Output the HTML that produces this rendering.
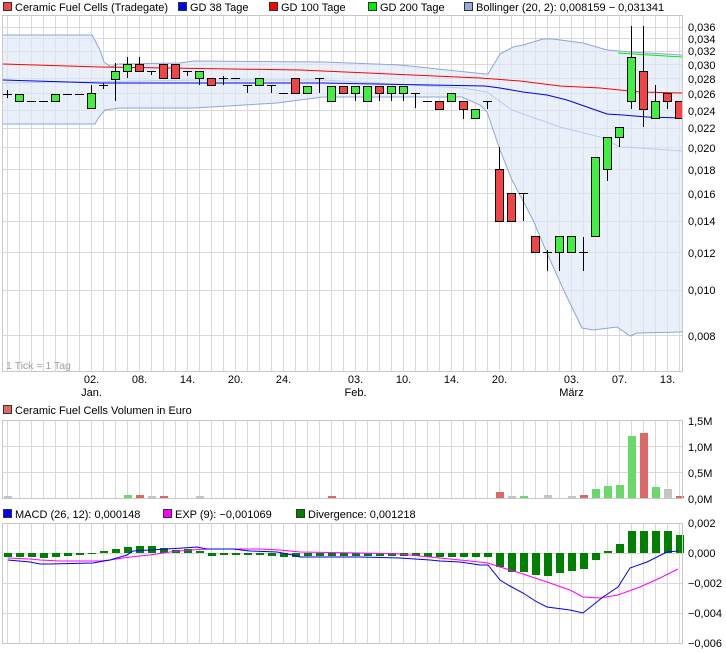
<!DOCTYPE html>
<html><head><meta charset="utf-8">
<style>
html,body{margin:0;padding:0;background:#fff;}
svg{display:block;font-family:"Liberation Sans",sans-serif;font-size:11px;}
</style></head>
<body>
<svg width="726" height="652" viewBox="0 0 726 652" xmlns="http://www.w3.org/2000/svg">
<defs>
<pattern id="vg" x="7" y="0" width="12" height="10" patternUnits="userSpaceOnUse"><rect x="0" y="0" width="1" height="10" fill="#d9d9d9"/></pattern>
<clipPath id="cm"><rect x="3" y="16" width="679" height="355"/></clipPath>
</defs>
<rect width="726" height="652" fill="#fff"/>

<!-- Legend top -->
<g>
<rect x="3.5" y="2.5" width="8" height="8" fill="#f04848" stroke="#333"/>
<text x="15" y="11">Ceramic Fuel Cells (Tradegate)</text>
<rect x="178.5" y="2.5" width="8" height="8" fill="#0000ff" stroke="#333"/>
<text x="190" y="11">GD 38 Tage</text>
<rect x="269.5" y="2.5" width="8" height="8" fill="#ff0000" stroke="#333"/>
<text x="281" y="11">GD 100 Tage</text>
<rect x="368.5" y="2.5" width="8" height="8" fill="#00ee00" stroke="#333"/>
<text x="380" y="11">GD 200 Tage</text>
<rect x="464.5" y="2.5" width="8" height="8" fill="#94acdc" stroke="#333"/>
<text x="476" y="11">Bollinger (20, 2): 0,008159 − 0,031341</text>
</g>

<!-- Main chart -->
<rect x="3" y="16" width="679" height="355" fill="url(#vg)"/>
<g stroke="#d9d9d9" stroke-width="1" shape-rendering="crispEdges">
<path d="M3 27.5H682M3 38.5H682M3 51.5H682M3 64.5H682M3 78.5H682M3 93.5H682M3 110.5H682M3 128.5H682M3 147.5H682M3 169.5H682M3 193.5H682M3 221.5H682M3 252.5H682M3 290.5H682M3 335.5H682"/>
</g>
<g clip-path="url(#cm)">
<path d="M3,35 L92,35 L100,50 L104,62 L111,67 L118,64 L180,63 L194,61 L323,62 L400,65 L485,74 L488,74 L500,54 L513,47 L523,45 L543,39 L553,39 L583,43 L607,50 L630,52 L682,55 L682,332 L637,333 L630,336 L617,327 L593,330 L582,328 L565,293 L547,253 L533,220 L512,180 L500,150 L487,112 L480,105 L462,97 L323,97 L277,103 L194,108 L120,108 L105,110 L99,117 L95,124 L3,124 Z" fill="#dfe8f8" fill-opacity="0.65"/>
<polyline points="3,35 92,35 100,50 104,62 111,67 118,64 180,63 194,61 323,62 400,65 485,74 488,74 500,54 513,47 523,45 543,39 553,39 583,43 607,50 630,52 682,55" fill="none" stroke="#8ea6da" stroke-width="1"/>
<polyline points="3,124 95,124 99,117 105,110 120,108 194,108 277,103 323,97 462,97 480,105 487,112 500,150 512,180 533,220 547,253 565,293 582,328 593,330 617,327 630,336 637,333 682,332" fill="none" stroke="#8ea6da" stroke-width="1"/>
<polyline points="3,83 200,80 323,80 462,88 487,92 512,110 560,127 600,137 620,147 640,148 682,151" fill="none" stroke="#b8ccf2" stroke-width="1"/>
<polyline points="3,64 100,67 300,70 480,78 520,81 560,86 600,88 640,92 682,93" fill="none" stroke="#ff0000" stroke-width="1"/>
<polyline points="3,80 100,83 323,83 485,86 500,88 523,92 547,95 567,100 587,107 607,114 623,115 647,117 682,118" fill="none" stroke="#0000ee" stroke-width="1"/>
<polyline points="618,53 650,55 682,57" fill="none" stroke="#00ee00" stroke-width="1"/>

<!-- wicks & doji -->
<path stroke="#000" stroke-width="1" fill="none" shape-rendering="crispEdges" d="M7.5 90V98M91.5 85V108M103.5 83V89M115.5 63V101M127.5 57V78M139.5 57V71M151.5 71V75M187.5 71V76M199.5 71V85M223.5 76V85M247.5 85V93M271.5 85V93M319.5 78V93M355.5 86V101M379.5 86V101M391.5 86V101M403.5 86V101M415.5 93V108M463.5 101V119M487.5 101V109M499.5 147V221M523.5 193V221M547.5 250V271M559.5 236V271M583.5 237V271M607.5 137V181M619.5 127V147M631.5 26V109M643.5 26V127M655.5 85V118M667.5 93V109
M3 94.5h9M27 101.5h9M39 101.5h9M63 94.5h9M75 94.5h9M99 85.5h9M147 71.5h9M183 71.5h9M219 78.5h9M231 78.5h9M243 85.5h9M267 85.5h9M279 93.5h9M315 78.5h9M411 93.5h9M423 101.5h9M483 101.5h9M519 193.5h9M543 252.5h9M579 252.5h9"/>
<!-- bodies -->
<g stroke="#000" stroke-width="1" shape-rendering="crispEdges">
<g fill="#3ff03f">
<rect x="15.5" y="94.5" width="8" height="7"/>
<rect x="51.5" y="94.5" width="8" height="7"/>
<rect x="87.5" y="93.5" width="8" height="15"/>
<rect x="111.5" y="71.5" width="8" height="8"/>
<rect x="123.5" y="64.5" width="8" height="7"/>
<rect x="195.5" y="71.5" width="8" height="7"/>
<rect x="255.5" y="78.5" width="8" height="7"/>
<rect x="303.5" y="86.5" width="8" height="7"/>
<rect x="327.5" y="86.5" width="8" height="15"/>
<rect x="351.5" y="86.5" width="8" height="7"/>
<rect x="363.5" y="86.5" width="8" height="15"/>
<rect x="387.5" y="86.5" width="8" height="7"/>
<rect x="399.5" y="86.5" width="8" height="7"/>
<rect x="447.5" y="93.5" width="8" height="8"/>
<rect x="471.5" y="109.5" width="8" height="9"/>
<rect x="555.5" y="236.5" width="8" height="16"/>
<rect x="567.5" y="236.5" width="8" height="16"/>
<rect x="591.5" y="157.5" width="8" height="79"/>
<rect x="603.5" y="137.5" width="8" height="32"/>
<rect x="615.5" y="127.5" width="8" height="10"/>
<rect x="627.5" y="57.5" width="8" height="44"/>
<rect x="651.5" y="101.5" width="8" height="17"/>
</g>
<g fill="#f24444">
<rect x="135.5" y="64.5" width="8" height="7"/>
<rect x="159.5" y="64.5" width="8" height="14"/>
<rect x="171.5" y="64.5" width="8" height="14"/>
<rect x="207.5" y="78.5" width="8" height="7"/>
<rect x="291.5" y="78.5" width="8" height="15"/>
<rect x="339.5" y="86.5" width="8" height="7"/>
<rect x="375.5" y="86.5" width="8" height="7"/>
<rect x="435.5" y="101.5" width="8" height="8"/>
<rect x="459.5" y="101.5" width="8" height="8"/>
<rect x="495.5" y="169.5" width="8" height="52"/>
<rect x="507.5" y="193.5" width="8" height="28"/>
<rect x="531.5" y="236.5" width="8" height="16"/>
<rect x="639.5" y="71.5" width="8" height="38"/>
<rect x="663.5" y="93.5" width="8" height="8"/>
<rect x="675.5" y="101.5" width="8" height="17"/>
</g>
</g>
</g>
<rect x="2.5" y="15.5" width="680" height="356" fill="none" stroke="#c8c8c8"/>
<text x="6" y="369" fill="#a0a0a0" font-size="10.5">1 Tick = 1 Tag</text>
<g fill="#000">
<text x="688" y="31">0,036</text><text x="688" y="43">0,034</text><text x="688" y="55">0,032</text>
<text x="688" y="69">0,030</text><text x="688" y="83">0,028</text><text x="688" y="98">0,026</text>
<text x="688" y="115">0,024</text><text x="688" y="132">0,022</text><text x="688" y="152">0,020</text>
<text x="688" y="174">0,018</text><text x="688" y="198">0,016</text><text x="688" y="225">0,014</text>
<text x="688" y="257">0,012</text><text x="688" y="294">0,010</text><text x="688" y="340">0,008</text>
</g>
<g text-anchor="middle">
<text x="91.5" y="383">02.</text><text x="91.5" y="396">Jan.</text>
<text x="139.5" y="383">08.</text><text x="187.5" y="383">14.</text>
<text x="235.5" y="383">20.</text><text x="283.5" y="383">24.</text>
<text x="355.5" y="383">03.</text><text x="355.5" y="396">Feb.</text>
<text x="403.5" y="383">10.</text><text x="451.5" y="383">14.</text>
<text x="499.5" y="383">20.</text>
<text x="571.5" y="383">03.</text><text x="571.5" y="396">März</text>
<text x="619.5" y="383">07.</text><text x="667.5" y="383">13.</text>
</g>

<!-- Volume -->
<rect x="3.5" y="405.5" width="8" height="8" fill="#dc6868" stroke="#333"/>
<text x="15" y="414">Ceramic Fuel Cells Volumen in Euro</text>
<rect x="3" y="421" width="679" height="77" fill="url(#vg)"/>
<path d="M3 446.5H682M3 472.5H682" stroke="#d9d9d9" shape-rendering="crispEdges"/>
<g shape-rendering="crispEdges">
<g fill="#c4c4c4">
<rect x="4" y="496" width="8" height="2"/><rect x="148" y="496" width="8" height="2"/><rect x="196" y="496" width="8" height="2"/>
<rect x="508" y="496" width="8" height="2"/><rect x="544" y="495" width="8" height="3"/><rect x="568" y="496" width="8" height="2"/>
<rect x="664" y="489" width="8" height="9"/>
</g>
<g fill="#6ad96a">
<rect x="124" y="495" width="8" height="3"/><rect x="520" y="496" width="8" height="2"/>
<rect x="592" y="489" width="8" height="9"/><rect x="604" y="486" width="8" height="12"/><rect x="616" y="485" width="8" height="13"/>
<rect x="628" y="436" width="8" height="62"/><rect x="652" y="487" width="8" height="11"/>
</g>
<g fill="#dc6868">
<rect x="136" y="495" width="8" height="3"/><rect x="160" y="496" width="8" height="2"/><rect x="328" y="496" width="8" height="2"/>
<rect x="496" y="492" width="8" height="6"/><rect x="580" y="495" width="8" height="3"/>
<rect x="640" y="433" width="8" height="65"/><rect x="676" y="496" width="8" height="2"/>
</g>
</g>
<rect x="2.5" y="420.5" width="680" height="78" fill="none" stroke="#c8c8c8"/>
<text x="688" y="425">1,5M</text><text x="688" y="451">1,0M</text><text x="688" y="477">0,5M</text><text x="688" y="503">0,0M</text>

<!-- MACD -->
<rect x="3.5" y="509.5" width="8" height="8" fill="#0000ff" stroke="#333"/>
<text x="15" y="518">MACD (26, 12): 0,000148</text>
<rect x="163.5" y="509.5" width="8" height="8" fill="#ff00ff" stroke="#333"/>
<text x="175" y="518">EXP (9): −0,001069</text>
<rect x="296.5" y="509.5" width="8" height="8" fill="#008000" stroke="#333"/>
<text x="308" y="518">Divergence: 0,001218</text>
<rect x="3" y="524" width="679" height="119" fill="url(#vg)"/>
<path d="M3 553.5H682M3 583.5H682M3 613.5H682" stroke="#d9d9d9" shape-rendering="crispEdges"/>
<g fill="#008000" shape-rendering="crispEdges">
<rect x="4" y="553" width="8" height="4"/><rect x="16" y="553" width="8" height="4"/><rect x="28" y="553" width="8" height="4"/>
<rect x="40" y="553" width="8" height="5"/><rect x="52" y="553" width="8" height="4"/><rect x="64" y="553" width="8" height="3"/>
<rect x="76" y="553" width="8" height="2"/><rect x="88" y="553" width="8" height="1"/><rect x="100" y="551" width="8" height="2"/>
<rect x="112" y="549" width="8" height="4"/><rect x="124" y="547" width="8" height="6"/><rect x="136" y="546" width="8" height="7"/>
<rect x="148" y="546" width="8" height="7"/><rect x="160" y="548" width="8" height="5"/><rect x="172" y="550" width="8" height="3"/>
<rect x="184" y="549" width="8" height="4"/><rect x="196" y="551" width="8" height="2"/><rect x="208" y="553" width="8" height="3"/>
<rect x="220" y="553" width="8" height="2"/><rect x="232" y="553" width="8" height="2"/><rect x="244" y="553" width="8" height="2"/>
<rect x="256" y="553" width="8" height="2"/><rect x="268" y="553" width="8" height="3"/><rect x="280" y="553" width="8" height="4"/>
<rect x="292" y="553" width="8" height="4"/><rect x="304" y="553" width="8" height="3"/><rect x="316" y="553" width="8" height="3"/>
<rect x="328" y="553" width="8" height="3"/><rect x="340" y="553" width="8" height="3"/><rect x="352" y="553" width="8" height="3"/>
<rect x="364" y="553" width="8" height="3"/><rect x="376" y="553" width="8" height="3"/><rect x="388" y="553" width="8" height="3"/>
<rect x="400" y="553" width="8" height="3"/><rect x="412" y="553" width="8" height="3"/><rect x="424" y="553" width="8" height="4"/>
<rect x="436" y="553" width="8" height="4"/><rect x="448" y="553" width="8" height="4"/><rect x="460" y="553" width="8" height="4"/>
<rect x="472" y="553" width="8" height="4"/><rect x="484" y="553" width="8" height="4"/><rect x="496" y="553" width="8" height="14"/>
<rect x="508" y="553" width="8" height="19"/><rect x="520" y="553" width="8" height="19"/><rect x="532" y="553" width="8" height="22"/>
<rect x="544" y="553" width="8" height="23"/><rect x="556" y="553" width="8" height="20"/><rect x="568" y="553" width="8" height="18"/>
<rect x="580" y="553" width="8" height="16"/><rect x="592" y="553" width="8" height="7"/><rect x="604" y="551" width="8" height="2"/>
<rect x="616" y="544" width="8" height="9"/><rect x="628" y="531" width="8" height="22"/><rect x="640" y="531" width="8" height="22"/>
<rect x="652" y="531" width="8" height="22"/><rect x="664" y="531" width="8" height="22"/><rect x="676" y="535" width="8" height="18"/>
</g>
<polyline fill="none" stroke="#ff00ff" stroke-width="1" points="8,558 30,559 40,560 60,561 100,561 110,560 130,557 150,555 170,552 190,550 210,549 260,549 280,550 300,552 360,553 400,554 440,558 470,561 488,563 500,567 520,573 547,582 570,590 583,597 600,598 618,595 640,587 660,578 678,569"/>
<polyline fill="none" stroke="#0000ee" stroke-width="1" points="8,560 30,562 40,564 50,564 93,563 110,560 127,555 133,551 150,550 183,548 197,547 207,549 233,549 250,551 277,552 293,555 300,557 360,557 400,558 430,560 440,561 460,562 480,565 488,565 500,580 508,585 523,593 537,602 547,607 570,610 583,613 603,597 618,587 630,568 647,562 667,552 678,551"/>
<rect x="2.5" y="523.5" width="680" height="120" fill="none" stroke="#c8c8c8"/>
<text x="688" y="527">0,002</text><text x="688" y="557">0,000</text><text x="688" y="587">−0,002</text>
<text x="688" y="617">−0,004</text><text x="688" y="647">−0,006</text>
</svg>
</body></html>
